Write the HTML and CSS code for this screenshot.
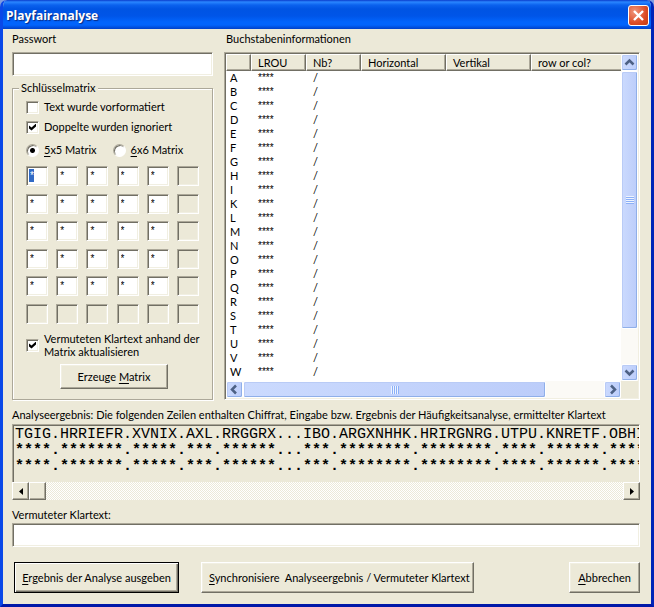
FILE: index.html
```html
<!DOCTYPE html>
<html lang="de">
<head>
<meta charset="utf-8">
<title>Playfairanalyse</title>
<link rel="stylesheet" href="styles.css">
</head>
<body>
<main class="window">
  <header class="titlebar">
    <h1>Playfairanalyse</h1>
    <button class="close" type="button" aria-label="Schließen"><svg viewBox="0 0 19 19"><path d="M5 5l9 9M14 5l-9 9"/></svg></button>
  </header>
  <form class="content">
    <div class="top">
      <section class="left">
        <label class="caption" for="password">Passwort</label>
        <input class="field" id="password" type="text">
        <fieldset class="group">
          <legend>Schlüsselmatrix</legend>
          <label class="option"><input type="checkbox">Text wurde vorformatiert</label>
          <label class="option"><input type="checkbox" checked>Doppelte wurden ignoriert</label>
          <div class="radios">
            <label class="option"><input type="radio" name="size" checked><span><u>5</u>x5 Matrix</span></label>
            <label class="option"><input type="radio" name="size"><span><u>6</u>x6 Matrix</span></label>
          </div>
          <div class="matrix">
            <input class="selected" aria-label="1,1" value="*"><input aria-label="1,2" value="*"><input aria-label="1,3" value="*"><input aria-label="1,4" value="*"><input aria-label="1,5" value="*"><input aria-label="1,6" disabled>
            <input aria-label="2,1" value="*"><input aria-label="2,2" value="*"><input aria-label="2,3" value="*"><input aria-label="2,4" value="*"><input aria-label="2,5" value="*"><input aria-label="2,6" disabled>
            <input aria-label="3,1" value="*"><input aria-label="3,2" value="*"><input aria-label="3,3" value="*"><input aria-label="3,4" value="*"><input aria-label="3,5" value="*"><input aria-label="3,6" disabled>
            <input aria-label="4,1" value="*"><input aria-label="4,2" value="*"><input aria-label="4,3" value="*"><input aria-label="4,4" value="*"><input aria-label="4,5" value="*"><input aria-label="4,6" disabled>
            <input aria-label="5,1" value="*"><input aria-label="5,2" value="*"><input aria-label="5,3" value="*"><input aria-label="5,4" value="*"><input aria-label="5,5" value="*"><input aria-label="5,6" disabled>
            <input aria-label="6,1" disabled><input aria-label="6,2" disabled><input aria-label="6,3" disabled><input aria-label="6,4" disabled><input aria-label="6,5" disabled><input aria-label="6,6" disabled>
          </div>
          <label class="option update"><input type="checkbox" checked><span>Vermuteten Klartext anhand der<br>Matrix aktualisieren</span></label>
          <button class="button create" type="button"><span>Erzeuge <u>M</u>atrix</span></button>
        </fieldset>
      </section>
      <section class="right">
        <h2 class="caption">Buchstabeninformationen</h2>
        <div class="list">
          <div class="rows">
            <table>
              <colgroup><col class="c-letter"><col class="c-short"><col class="c-short"><col class="c-long"><col class="c-long"><col></colgroup>
              <thead><tr><th></th><th>LROU</th><th>Nb?</th><th>Horizontal</th><th>Vertikal</th><th>row or col?</th></tr></thead>
              <tbody>
                <tr><td>A</td><td class="stars">****</td><td>/</td><td></td><td></td><td></td></tr>
                <tr><td>B</td><td class="stars">****</td><td>/</td><td></td><td></td><td></td></tr>
                <tr><td>C</td><td class="stars">****</td><td>/</td><td></td><td></td><td></td></tr>
                <tr><td>D</td><td class="stars">****</td><td>/</td><td></td><td></td><td></td></tr>
                <tr><td>E</td><td class="stars">****</td><td>/</td><td></td><td></td><td></td></tr>
                <tr><td>F</td><td class="stars">****</td><td>/</td><td></td><td></td><td></td></tr>
                <tr><td>G</td><td class="stars">****</td><td>/</td><td></td><td></td><td></td></tr>
                <tr><td>H</td><td class="stars">****</td><td>/</td><td></td><td></td><td></td></tr>
                <tr><td>I</td><td class="stars">****</td><td>/</td><td></td><td></td><td></td></tr>
                <tr><td>K</td><td class="stars">****</td><td>/</td><td></td><td></td><td></td></tr>
                <tr><td>L</td><td class="stars">****</td><td>/</td><td></td><td></td><td></td></tr>
                <tr><td>M</td><td class="stars">****</td><td>/</td><td></td><td></td><td></td></tr>
                <tr><td>N</td><td class="stars">****</td><td>/</td><td></td><td></td><td></td></tr>
                <tr><td>O</td><td class="stars">****</td><td>/</td><td></td><td></td><td></td></tr>
                <tr><td>P</td><td class="stars">****</td><td>/</td><td></td><td></td><td></td></tr>
                <tr><td>Q</td><td class="stars">****</td><td>/</td><td></td><td></td><td></td></tr>
                <tr><td>R</td><td class="stars">****</td><td>/</td><td></td><td></td><td></td></tr>
                <tr><td>S</td><td class="stars">****</td><td>/</td><td></td><td></td><td></td></tr>
                <tr><td>T</td><td class="stars">****</td><td>/</td><td></td><td></td><td></td></tr>
                <tr><td>U</td><td class="stars">****</td><td>/</td><td></td><td></td><td></td></tr>
                <tr><td>V</td><td class="stars">****</td><td>/</td><td></td><td></td><td></td></tr>
                <tr><td>W</td><td class="stars">****</td><td>/</td><td></td><td></td><td></td></tr>
              </tbody>
            </table>
          </div>
          <div class="scroll vertical">
            <button type="button" class="arrow" aria-label="Nach oben"><svg viewBox="0 0 15 15"><path d="M3.500 9.500l4-4 4 4"/></svg></button>
            <div class="track"><div class="thumb"><i class="grip"></i></div></div>
            <button type="button" class="arrow" aria-label="Nach unten"><svg viewBox="0 0 15 15"><path d="M3.500 5.500l4 4 4-4"/></svg></button>
          </div>
          <div class="scroll horizontal">
            <button type="button" class="arrow" aria-label="Nach links"><svg viewBox="0 0 15 15"><path d="M9 3.500l-4 4 4 4"/></svg></button>
            <div class="track"><div class="thumb"><i class="grip"></i></div></div>
            <button type="button" class="arrow" aria-label="Nach rechts"><svg viewBox="0 0 15 15"><path d="M6 3.500l4 4-4 4"/></svg></button>
          </div>
        </div>
      </section>
    </div>
    <h2 class="caption result-caption">Analyseergebnis: Die folgenden Zeilen enthalten Chiffrat, Eingabe bzw. Ergebnis der Häufigkeitsanalyse, ermittelter Klartext</h2>
    <pre class="result">TGIG.HRRIEFR.XVNIX.AXL.RRGGRX...IBO.ARGXNHHK.HRIRGNRG.UTPU.KNRETF.OBHI
<b>****.*******.*****.***.******...***.********.********.****.******.****</b>
<b>****.*******.*****.***.******...***.********.********.****.******.****</b></pre>
    <div class="classic">
      <button type="button" aria-label="Nach links"><svg viewBox="0 0 4 7"><path d="M4 0v7L0 3.500z"/></svg></button>
      <div class="classic-thumb"></div>
      <button class="end" type="button" aria-label="Nach rechts"><svg viewBox="0 0 4 7"><path d="M0 0v7l4-3.500z"/></svg></button>
    </div>
    <label class="caption plain-caption" for="plain">Vermuteter Klartext:</label>
    <input class="field" id="plain" type="text">
    <footer class="actions">
      <button class="button default" type="submit"><span><u>E</u>rgebnis der Analyse ausgeben</span></button>
      <button class="button sync" type="button"><span><u>S</u>ynchronisiere&nbsp; Analyseergebnis / Vermuteter Klartext</span></button>
      <button class="button cancel" type="button"><span><u>A</u>bbrechen</span></button>
    </footer>
  </form>
</main>
</body>
</html>
```
FILE: styles.css
```css
* { box-sizing: border-box; }

body {
  margin: 0;
  background: #7f9ce0;
  font: 11px/14px Lato, "Liberation Sans", sans-serif;
  color: #000;
}

button, input { font: inherit; color: inherit; margin: 0; padding: 0; border-radius: 0; }
h1, h2 { margin: 0; font-size: 11px; font-weight: normal; }
u { text-underline-offset: 2px; }

.window {
  display: flex;
  flex-direction: column;
  min-height: 100vh;
  border: solid;
  border-width: 0 3px 3px;
  border-color: #0a3fd8 #0024b8 #0018a8 #0a48e8;
  border-radius: 7px 7px 0 0;
  background: #ece9d8;
  overflow: hidden;
}

.titlebar {
  display: flex;
  align-items: center;
  justify-content: space-between;
  height: 29px;
  margin: 0 -3px;
  padding: 2px 5px 0 6px;
  background: linear-gradient(#0a3ccc 0, #2a86ff 2px, #0b62ee 5px, #0054e3 9px, #0055e8 16px, #0264fc 22px, #0264fc 25px, #0040c8 29px);
}
.titlebar h1 {
  font: bold 12px/18px "Open Sans", sans-serif;
  color: #fff;
  text-shadow: 1px 1px 1px #0a2a80;
}
.close {
  width: 21px;
  height: 21px;
  border: 1px solid #fff;
  border-radius: 3px;
  background: radial-gradient(circle at 30% 30%, #f0967c, #dc4c26 60%, #c43a10);
}
.close svg { display: block; width: 19px; height: 19px; fill: none; stroke: #fff; stroke-width: 2.400; }

.content { flex: 1; display: flex; flex-direction: column; padding: 3px 11px 8px 9px; }
.caption { display: block; line-height: 14px; white-space: nowrap; }
.top { display: grid; grid-template-columns: 201px minmax(0, 1fr); column-gap: 11px; }
.left, .right { display: flex; flex-direction: column; }
.left .caption { margin-bottom: 6px; }
.right .caption { margin: 0 0 6px 2px; }

/* sunken edge shared by every box that holds data */
.field, .matrix input, .list, .result, input[type="checkbox"] {
  border: 1px solid;
  border-color: #aca899 #fff #fff #aca899;
  box-shadow: inset 1px 1px 0 #716f64, inset -1px -1px 0 #f1efe2;
  background: #fff;
  outline: 0;
}
.field { width: 100%; height: 24px; padding: 0 4px; }

.group {
  margin: 5px 0 0;
  padding: 2px 13px 10px 13px;
  min-width: 0;
  border: 1px solid #aca899;
  box-shadow: 1px 1px 0 #fff, inset 1px 1px 0 #fff;
}
.group legend { margin-left: -7px; padding: 0 2px; line-height: 14px; background: #ece9d8; }
.option { display: flex; align-items: center; gap: 5px; height: 20px; white-space: nowrap; }
.option input { appearance: none; position: relative; flex: none; width: 13px; height: 13px; }
input[type="checkbox"]:checked::after {
  content: "";
  position: absolute;
  inset: 2px;
  background: #000;
  clip-path: polygon(0 29%, 36% 58%, 100% 0, 100% 42%, 36% 100%, 0 72%);
}
input[type="radio"] {
  border: 1px solid;
  border-color: #aca899 #fff #fff #aca899;
  border-radius: 50%;
  background: #fff;
  box-shadow: inset 1px 1px 0 #716f64;
}
input[type="radio"]:checked { background: radial-gradient(circle, #000 2px, #fff 3px); }
.radios { display: flex; gap: 16px; padding-top: 3px; }

.matrix {
  display: grid;
  grid-template-columns: repeat(6, 22px);
  justify-content: space-between;
  align-content: space-between;
  height: 158px;
  margin-top: 6px;
}
.matrix input {
  width: 22px;
  height: 20px;
  padding: 0 0 1px 3px;
  font: 10px/14px "Liberation Sans", sans-serif;
}
.matrix input:disabled { background: #ece9d8; }
.matrix .selected {
  color: #fff;
  background: linear-gradient(#316ac5, #316ac5) 2px 2px / 5px 13px no-repeat, #fff;
}
.update { height: 26px; margin-top: 8px; line-height: 13px; }

.button {
  padding: 0 7px;
  border: 1px solid;
  border-color: #fff #716f64 #716f64 #fff;
  box-shadow: inset -1px -1px 0 #aca899, inset 1px 1px 0 #f1efe2;
  background: #ece9d8;
  white-space: nowrap;
}
.create { display: block; width: 108px; height: 25px; margin: 6px auto 0 34px; }

.list {
  flex: 1;
  display: grid;
  grid-template: minmax(0, 1fr) 17px / minmax(0, 1fr) 17px;
  padding: 1px;
  background: linear-gradient(#ece9d8, #ece9d8) right bottom / 18px 18px no-repeat, #fff;
}
.rows { overflow: hidden; }
table { width: 100%; table-layout: fixed; border-collapse: separate; border-spacing: 0; }
.c-letter { width: 25px; }
.c-short { width: 55px; }
.c-long { width: 85px; }
th {
  height: 17px;
  padding: 0 0 0 6px;
  border: 1px solid;
  border-color: #fff #716f64 #716f64 #fff;
  box-shadow: inset -1px -1px 0 #aca899;
  background: #ece9d8;
  font-weight: normal;
  line-height: 14px;
  text-align: left;
}
th:last-child { border-right: 0; box-shadow: inset 0 -1px 0 #aca899; }
td { height: 14px; padding: 0 0 0 7px; line-height: 14px; }
td:first-child { padding-left: 4px; }
.stars { font: 10px/14px "Liberation Sans", sans-serif; }

.scroll { display: flex; background: #fbfaf6; }
.scroll .track { flex: 1; display: flex; }
.vertical, .vertical .track { flex-direction: column; }
.arrow, .thumb {
  border: 1px solid #fff;
  border-radius: 2px;
  background: linear-gradient(90deg, #cbdafe, #bccdfa);
  box-shadow: inset -1px -1px 0 #8fafe9, inset 1px 1px 0 #b9cbf6;
}
.arrow { flex: none; width: 17px; height: 17px; }
.arrow svg { display: block; width: 15px; height: 15px; fill: none; stroke: #4d6185; stroke-width: 2.500; }
.thumb { display: flex; align-items: center; justify-content: center; }
.vertical .thumb { height: 88%; }
.horizontal .thumb { width: 84%; }
.grip { width: 8px; height: 8px; }
.vertical .grip { background: repeating-linear-gradient(#eef4fe 0 1px, #8cb0f8 1px 2px); }
.horizontal .grip { background: repeating-linear-gradient(90deg, #eef4fe 0 1px, #8cb0f8 1px 2px); }
.horizontal { grid-column: 1; }

.result-caption { margin-top: 8px; }
.result {
  height: 58px;
  margin: 2px 0 0;
  padding: 2px 0 0 2px;
  border-bottom: 0;
  background: #ece9d8;
  box-shadow: inset 1px 1px 0 #716f64;
  overflow: hidden;
  font: 15px/16px "Liberation Mono", monospace;
}
.classic {
  display: flex;
  height: 18px;
  background: repeating-conic-gradient(#fff 0 25%, #ece9d8 0 50%) 0 0 / 2px 2px;
}
.classic button, .classic-thumb {
  display: grid;
  place-items: center;
  width: 17px;
  border: 1px solid;
  border-color: #fff #716f64 #716f64 #fff;
  box-shadow: inset -1px -1px 0 #aca899;
  background: #ece9d8;
}
.classic svg { width: 4px; height: 7px; }
.classic .end { margin-left: auto; }
.plain-caption { margin: 8px 0 1px; }

.actions { display: flex; margin-top: 15px; padding-left: 2px; }
.actions .button { height: 31px; }
.actions .default {
  width: 165px;
  border-color: #000;
  box-shadow: inset 1px 1px 0 #fff, inset -1px -1px 0 #716f64, inset -2px -2px 0 #aca899;
}
.actions .sync { width: 273px; margin-left: 22px; }
.actions .cancel { width: 71px; margin-left: auto; }
```
